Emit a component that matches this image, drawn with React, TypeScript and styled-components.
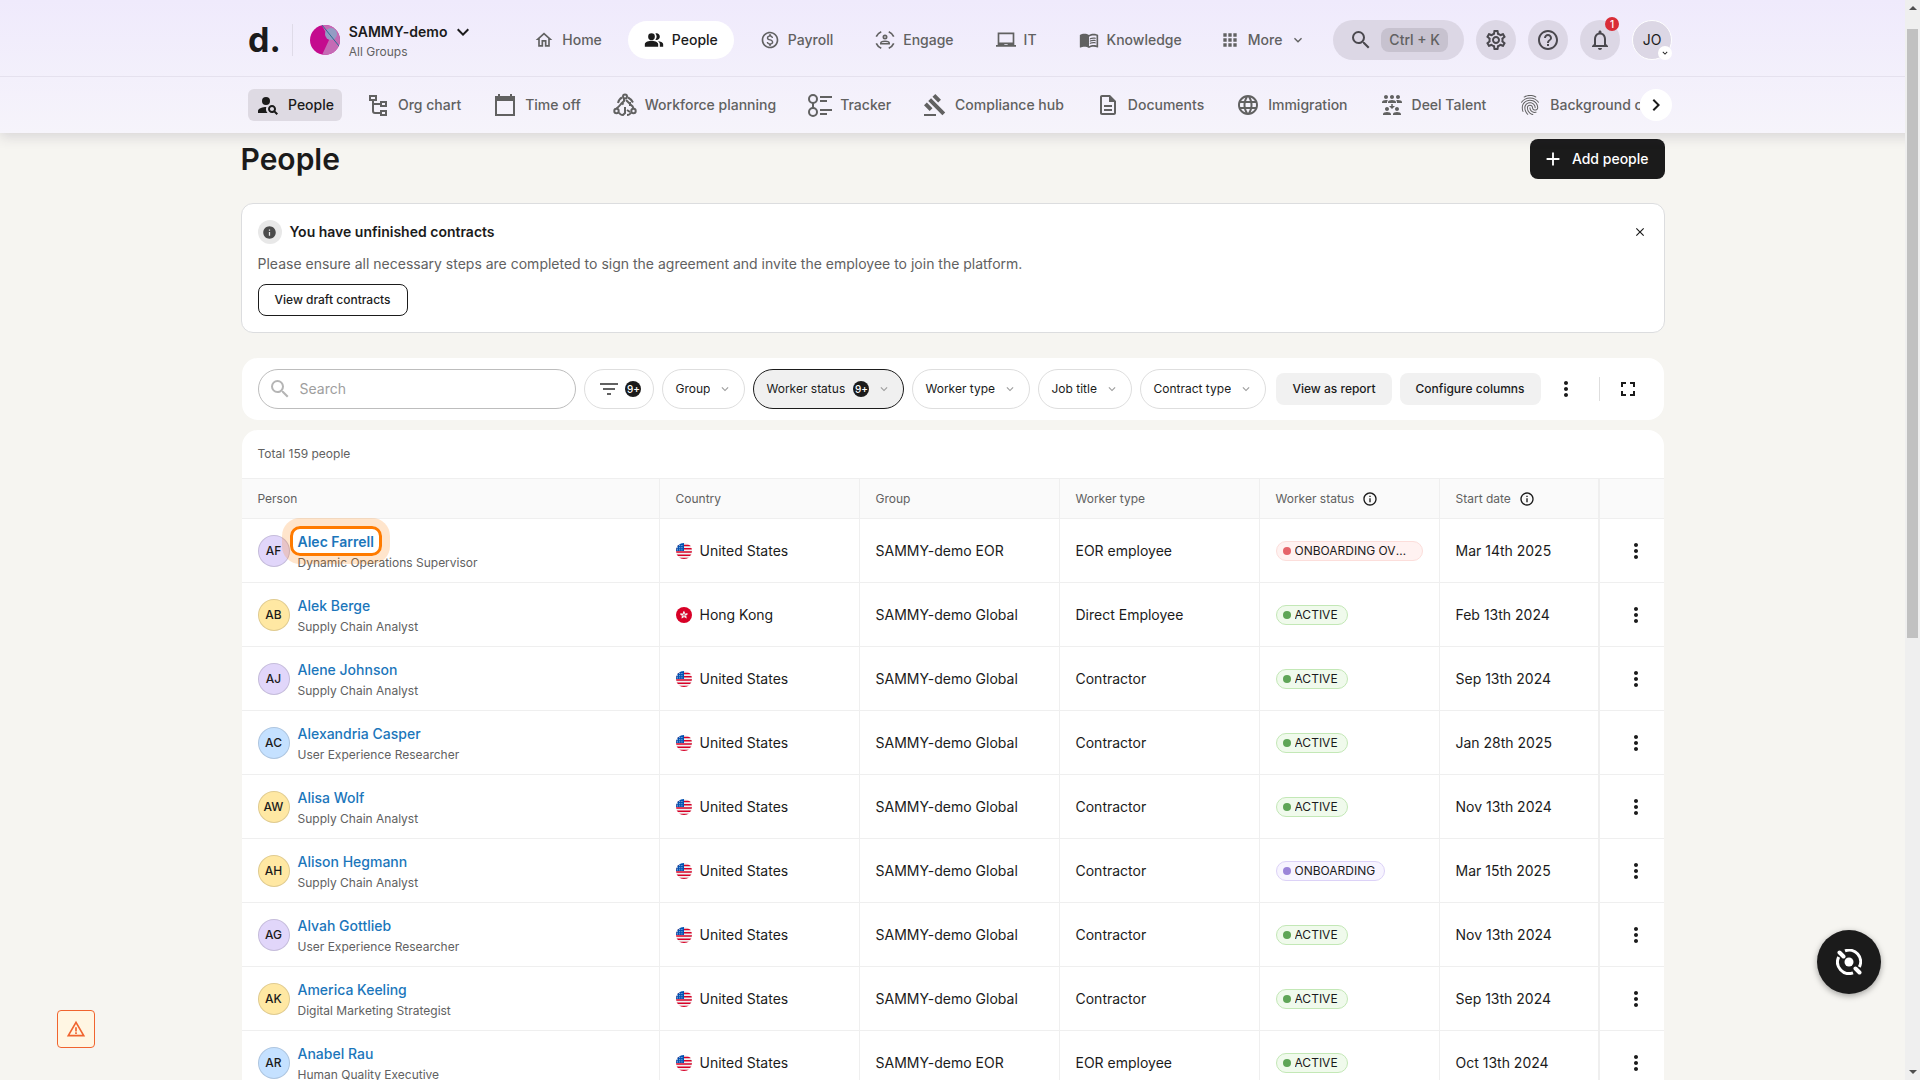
import React from "react";
import styled, { createGlobalStyle, css } from "styled-components";
import {
  MdOutlineHome, MdPeopleAlt, MdOutlineMonetizationOn, MdLaptopChromebook, MdMenuBook, MdApps,
  MdKeyboardArrowDown, MdSearch, MdOutlineSettings, MdHelpOutline, MdOutlineNotifications,
  MdPersonSearch, MdGavel, MdOutlineDescription, MdLanguage,
  MdReduceCapacity, MdFingerprint, MdChevronRight, MdAdd, MdInfo, MdInfoOutline, MdClose,
  MdFilterList, MdMoreVert, MdFullscreen, MdWarningAmber,
} from "react-icons/md";

const ink = "#1b1b1b";
const muted = "#616161";
const line = "#efefef";

const GlobalStyle = createGlobalStyle`
  *, *::before, *::after { box-sizing: border-box; }
  body {
    margin: 0;
    background: #f6f5f1;
    color: ${ink};
    font: 400 14px/20px Inter, "Liberation Sans", sans-serif;
  }
  button, input, select { font: inherit; color: inherit; margin: 0; }
  button { cursor: pointer; border: 0; padding: 0; background: none; }
  a { color: inherit; text-decoration: none; }
  svg { flex: none; display: block; }
  h1, h2, p { margin: 0; }
`;

const Page = styled.div`
  height: 100vh;
  overflow: hidden;
`;

/* ---------- header ---------- */

const Header = styled.header`
  position: relative;
  z-index: 1;
  background: linear-gradient(#efeafc, #f6f4fb);
  box-shadow: 0 4px 12px rgba(60, 50, 80, 0.16);
  color: ${muted};
  font-weight: 500;
`;

const HeaderInner = styled.div`
  max-width: 1424px;
  margin: 0 auto;
  display: flex;
  align-items: center;
`;

const TopBar = styled(HeaderInner)`
  height: 76px;
  padding-top: 4px;
`;

const TabBarEdge = styled.div`
  border-top: 1px solid #e5e1ee;
`;

const TabBar = styled(HeaderInner)`
  height: 56px;
`;

const Logo = styled.a`
  color: ${ink};
  font-size: 34px;
  line-height: 40px;
  font-weight: 700;
`;

const LogoRule = styled.span`
  width: 1px;
  height: 32px;
  margin: 0 17px 0 11px;
  background: #dfdbe8;
`;

const Workspace = styled.button`
  display: flex;
  align-items: center;
  gap: 9px;
  text-align: left;
`;

const WorkspaceName = styled.span`
  display: flex;
  align-items: center;
  gap: 4px;
  color: ${ink};
  font-weight: 600;
`;

const WorkspaceGroup = styled.span`
  display: block;
  font-size: 12px;
  line-height: 16px;
  font-weight: 400;
`;

const MainNav = styled.nav`
  display: flex;
  gap: 10px;
  margin: 0 27px 0 auto;
`;

const NavItem = styled.a<{ $active?: boolean }>`
  display: flex;
  align-items: center;
  gap: 8px;
  height: 38px;
  padding: 0 16px;
  border-radius: 19px;
  ${(p) => p.$active && css`background: #fff; color: ${ink};`}
`;

const MoreButton = styled(NavItem).attrs({ as: "button" })`
  padding: 0;
  margin-left: 12px;
`;

const Tools = styled.div`
  display: flex;
  gap: 12px;
  color: #4a484e;
`;

const Quick = styled.button`
  display: flex;
  align-items: center;
  gap: 8px;
  height: 40px;
  padding: 0 16px;
  border-radius: 20px;
  background: #dcd7e5;
`;

const Keys = styled.kbd`
  padding: 2px 8px;
  border-radius: 8px;
  background: #c7c2cf;
  color: ${muted};
  font: inherit;
`;

const Round = styled.button<{ $ring?: boolean }>`
  position: relative;
  display: grid;
  place-items: center;
  width: 40px;
  height: 40px;
  border-radius: 50%;
  background: #dcd7e5;
  ${(p) => p.$ring && css`border: 1px solid #fff; color: ${ink}; font-weight: 400;`}
`;

const Alert = styled.span`
  position: absolute;
  top: -3px;
  right: 1px;
  width: 14px;
  height: 14px;
  border-radius: 50%;
  background: #d92d37;
  color: #fff;
  font-size: 10px;
  line-height: 14px;
`;

const AvatarCaret = styled.span`
  position: absolute;
  right: -1px;
  bottom: -1px;
  width: 14px;
  height: 14px;
  display: grid;
  place-items: center;
  border-radius: 50%;
  background: #fff;
`;

const Tabs = styled.nav`
  display: flex;
  flex: 1;
  min-width: 0;
  gap: 16px;
  overflow: hidden;
`;

const Tab = styled.a<{ $active?: boolean }>`
  display: flex;
  flex: none;
  align-items: center;
  gap: 8px;
  height: 32px;
  padding: 0 8px;
  border-radius: 6px;
  ${(p) => p.$active && css`background: #dedae3; color: ${ink};`}
`;

const ScrollTabs = styled.button`
  display: grid;
  flex: none;
  place-items: center;
  width: 32px;
  height: 32px;
  border-radius: 50%;
  background: #fff;
  color: ${ink};
`;

/* ---------- page body ---------- */

const Viewport = styled.div`
  padding-right: 15px;
`;

const Main = styled.main`
  max-width: 1424px;
  margin: 0 auto;
  padding-top: 6px;
`;

const TitleRow = styled.div`
  display: flex;
  align-items: center;
  justify-content: space-between;
  margin-bottom: 24px;
`;

const Title = styled.h1`
  font-size: 30px;
  line-height: 40px;
  font-weight: 600;
`;

const AddButton = styled.button`
  display: flex;
  align-items: center;
  gap: 8px;
  height: 40px;
  padding: 0 16px 0 12px;
  border-radius: 8px;
  background: ${ink};
  color: #fff;
  font-weight: 500;
`;

const Banner = styled.section`
  display: flex;
  align-items: flex-start;
  justify-content: space-between;
  margin-bottom: 25px;
  padding: 16px;
  border: 1px solid #dcdddf;
  border-radius: 12px;
  background: #fff;
`;

const BannerTitle = styled.h2`
  display: flex;
  align-items: center;
  gap: 8px;
  font-size: 14px;
  line-height: 24px;
  font-weight: 600;
`;

const BannerIcon = styled.span`
  display: grid;
  place-items: center;
  width: 24px;
  height: 24px;
  border-radius: 50%;
  background: #e8e8e8;
  color: #4a4a4a;
`;

const BannerText = styled.p`
  margin: 10px 0;
  color: ${muted};
`;

const OutlineButton = styled.button`
  height: 32px;
  padding: 0 16px;
  border: 1px solid ${ink};
  border-radius: 8px;
  font-size: 12px;
  font-weight: 500;
`;

const CloseButton = styled.button`
  display: grid;
  place-items: center;
  width: 16px;
  height: 24px;
`;

const Toolbar = styled.div`
  display: flex;
  align-items: center;
  gap: 8px;
  margin: 0 1px 10px;
  padding: 11px 16px;
  border-radius: 16px;
  background: #fff;
  font-size: 12px;
  font-weight: 500;
`;

const SearchBox = styled.label`
  display: flex;
  flex: 1;
  align-items: center;
  gap: 8px;
  height: 40px;
  padding: 0 9px;
  border: 1px solid #bdbdbd;
  border-radius: 20px;
  color: #b5b5b5;
`;

const SearchInput = styled.input`
  flex: 1;
  min-width: 0;
  padding: 0;
  border: 0;
  outline: 0;
  background: none;
  color: ${ink};
  font-size: 14px;
  font-weight: 400;
  &::placeholder { color: #9e9e9e; opacity: 1; }
`;

const pill = css`
  display: flex;
  flex: none;
  align-items: center;
  height: 40px;
  padding: 0 12px;
  border: 1px solid #dedede;
  border-radius: 20px;
`;

const FilterButton = styled.button`
  ${pill}
  gap: 4px;
  color: ${muted};
`;

const FilterPill = styled.label<{ $active?: boolean }>`
  ${pill}
  gap: 8px;
  color: #9e9e9e;
  ${(p) => p.$active && css`border-color: ${ink}; background: #f0f0f0;`}
`;

const FilterSelect = styled.select`
  appearance: none;
  padding: 0;
  border: 0;
  background: none;
  color: ${ink};
  font-weight: 400;
`;

const Count = styled.span`
  width: 16px;
  height: 16px;
  border-radius: 50%;
  background: ${ink};
  color: #fff;
  font-size: 10px;
  line-height: 16px;
  text-align: center;
`;

const SoftButton = styled.button`
  flex: none;
  height: 32px;
  padding: 0 16px;
  border-radius: 8px;
  background: #f1f1f1;
`;

const ToolbarEnd = styled.div`
  display: flex;
  align-items: center;
  gap: 8px;
  padding-left: 2px;
`;

const IconButton = styled.button<{ $wide?: boolean }>`
  display: grid;
  place-items: center;
  width: ${(p) => (p.$wide ? 40 : 34)}px;
  height: 40px;
`;

const Rule = styled.span`
  width: 1px;
  height: 24px;
  margin-left: 8px;
  background: #dedede;
`;

/* ---------- table ---------- */

const TableCard = styled.section`
  margin: 0 1px;
  border-radius: 16px 16px 0 0;
  background: #fff;
`;

const Total = styled.p`
  padding: 14px 16px;
  color: ${muted};
  font-size: 12px;
`;

const Table = styled.table`
  width: 100%;
  table-layout: fixed;
  border-collapse: separate;
  border-spacing: 0;
`;

const Col = styled.col<{ $w?: number }>`
  width: ${(p) => (p.$w ? `${p.$w}px` : "auto")};
`;

const cell = css`
  padding: 0 16px;
  border-bottom: 1px solid ${line};
  border-right: 1px solid ${line};
  text-align: left;
  &:last-child { border-right: 0; border-left: 1px solid ${line}; }
`;

const Th = styled.th`
  ${cell}
  height: 41px;
  border-top: 1px solid ${line};
  background: #fafafa;
  color: ${muted};
  font-size: 12px;
  font-weight: 400;
`;

const Td = styled.td`
  ${cell}
  height: 64px;
`;

const HeadLabel = styled.span`
  display: flex;
  align-items: center;
  gap: 8px;
  svg { color: ${ink}; }
`;

const Person = styled.div`
  display: flex;
  align-items: center;
  gap: 8px;
`;

const PersonText = styled.div`
  padding-top: 2px;
`;

const tones = { purple: "#e1d6fa", yellow: "#ffe8a3", blue: "#c5e1ff" };
type Tone = keyof typeof tones;

const Avatar = styled.span<{ $tone: Tone }>`
  display: grid;
  flex: none;
  place-items: center;
  width: 32px;
  height: 32px;
  border: 1px solid rgba(0, 0, 0, 0.12);
  border-radius: 50%;
  background: ${(p) => tones[p.$tone]};
  font-size: 12px;
  font-weight: 500;
`;

const PersonLink = styled.a<{ $focus?: boolean }>`
  position: relative;
  display: block;
  width: fit-content;
  color: #1b76bb;
  line-height: 22px;
  font-weight: ${(p) => (p.$focus ? 600 : 500)};
  ${(p) => p.$focus && css`
    &::after {
      content: "";
      position: absolute;
      inset: -5px -8px -3px;
      border: 3px solid #ff7b00;
      border-radius: 10px;
      box-shadow: 0 0 0 8px rgba(255, 123, 0, 0.2);
    }
  `}
`;

const Role = styled.span`
  display: block;
  color: ${muted};
  font-size: 12px;
`;

const Country = styled.span`
  display: flex;
  align-items: center;
  gap: 8px;
`;

const statusTones = {
  green: { bg: "#f0faec", edge: "#c3e8b6", dot: "#5fa557" },
  red: { bg: "#fff2f1", edge: "#fcdedb", dot: "#e5646a" },
  violet: { bg: "#f7f4ff", edge: "#dcd2f7", dot: "#9b84d9" },
};
type StatusTone = keyof typeof statusTones;

const Status = styled.span<{ $tone: StatusTone }>`
  display: flex;
  align-items: center;
  gap: 4px;
  width: fit-content;
  max-width: 100%;
  height: 20px;
  padding: 0 9px 0 6px;
  border: 1px solid ${(p) => statusTones[p.$tone].edge};
  border-radius: 10px;
  background: ${(p) => statusTones[p.$tone].bg};
  font-size: 12px;
  line-height: 18px;
  &::before {
    content: "";
    flex: none;
    width: 8px;
    height: 8px;
    border-radius: 50%;
    background: ${(p) => statusTones[p.$tone].dot};
  }
`;

const StatusText = styled.span`
  overflow: hidden;
  text-overflow: ellipsis;
  white-space: nowrap;
`;

const RowMenu = styled.button`
  display: grid;
  place-items: center;
  width: 40px;
  height: 40px;
`;

/* ---------- floating parts ---------- */

const Fab = styled.button`
  position: fixed;
  right: 39px;
  bottom: 86px;
  z-index: 2;
  display: grid;
  place-items: center;
  width: 64px;
  height: 64px;
  border-radius: 50%;
  background: ${ink};
  box-shadow: 0 2px 6px rgba(0, 0, 0, 0.35);
`;

const WarnButton = styled.button`
  position: fixed;
  left: 57px;
  bottom: 32px;
  z-index: 2;
  display: grid;
  place-items: center;
  width: 38px;
  height: 38px;
  border: 1px solid #f0642f;
  border-radius: 4px;
  background: #fff6e3;
  color: #f0642f;
`;

const Scrollbar = styled.div`
  position: fixed;
  top: 0;
  right: 0;
  bottom: 0;
  z-index: 3;
  display: flex;
  flex-direction: column;
  align-items: center;
  justify-content: space-between;
  width: 15px;
  padding: 6px 0;
  background: #efefef;
`;

const Thumb = styled.span`
  width: 11px;
  height: 57%;
  margin: 19px 0 auto;
  background: #c1c1c1;
`;

const Arrow = styled.span<{ $up?: boolean }>`
  border: solid transparent;
  border-width: ${(p) => (p.$up ? "0 4px 4px" : "4px 4px 0")};
  ${(p) => (p.$up ? "border-bottom-color" : "border-top-color")}: #505050;
`;

/* ---------- drawings ---------- */

const stroke = { fill: "none", stroke: "currentColor", strokeWidth: 2 } as const;

const WorkspaceLogo = () => (
  <svg width="30" height="30" viewBox="0 0 30 30" aria-hidden="true">
    <defs><clipPath id="ws"><circle cx="15" cy="15" r="15" /></clipPath></defs>
    <g clipPath="url(#ws)">
      <path fill="#c40b8e" d="M0 0h30v30H0z" />
      <path fill="#c56bb5" d="M12 0h18v30H12l7-15z" />
      <circle cx="21" cy="9" r="6" fill="#949cc4" />
      <path d="M12 0l17 21" stroke="#2d6d92" strokeWidth="1" />
    </g>
  </svg>
);

const EngageIcon = () => (
  <svg width="20" height="20" viewBox="0 0 24 24" aria-hidden="true" {...stroke}>
    <path d="M7.500 2a12 12 0 0 0-6 6M16.500 2a12 12 0 0 1 6 6M1.500 16a12 12 0 0 0 6 6M22.500 16a12 12 0 0 1-6 6" />
    <circle cx="12" cy="8.500" r="2" />
    <path d="M7 16.500v-.7c0-1.500 3-2.300 5-2.300s5 .8 5 2.300v.7z" />
  </svg>
);

const OrgChartIcon = () => (
  <svg width="24" height="24" viewBox="0 0 24 24" aria-hidden="true" {...stroke}>
    <path d="M4 3h6v4H4zM15 9h5v4h-5zM15 18h5v4h-5zM7 7v11q0 2 2 2h6M7 11h8" />
  </svg>
);

const CalendarIcon = () => (
  <svg width="24" height="24" viewBox="0 0 24 24" aria-hidden="true" fill="currentColor">
    <path d="M22 3h-3V1h-2v2H7V1H5v2H2v20h20V3zm-2 18H4V8h16v13z" />
  </svg>
);

const WorkforceIcon = () => (
  <svg width="24" height="24" viewBox="0 0 24 24" aria-hidden="true" {...stroke}>
    <circle cx="12" cy="3.500" r="2" />
    <circle cx="3.500" cy="18" r="2.200" />
    <circle cx="20.500" cy="18" r="2.200" />
    <path d="M9 4.500Q6 6 5 10M15 4.500Q18 6 20 9.500M11 6v2L8 11q-1.500 2-4.500 4.500M8.500 9.500l2 2M13 7l5 5q2 1 2.500 3.500M17 9v4M6 19.500q1 2.500 4 2.500l2-2v-6M14 22q3 0 4-2.500M14 17l3 2" />
  </svg>
);

const TrackerIcon = () => (
  <svg width="24" height="24" viewBox="0 0 24 24" aria-hidden="true" {...stroke}>
    <circle cx="5" cy="6" r="4" />
    <circle cx="5" cy="19" r="4" />
    <path d="M5 10v5M12 4h12M12 8h7M12 17h12M12 21h7" />
  </svg>
);

const UsFlag = () => (
  <svg width="16" height="16" viewBox="0 0 16 16" aria-hidden="true">
    <defs><clipPath id="flag"><circle cx="8" cy="8" r="8" /></clipPath></defs>
    <g clipPath="url(#flag)">
      <path fill="#f0f0f0" d="M0 0h16v16H0z" />
      <path d="M0 2.500h16M0 5.700h16M0 9h16M0 12.200h16M0 15.400h16" stroke="#d80027" strokeWidth="1.500" />
      <path fill="#0052b4" d="M0 0h8v8H0z" />
      <path d="M1 2.500h6.500M1 4.700h6.500M1 6.900h6.500" stroke="#f0f0f0" strokeWidth=".7" strokeDasharray="1 1.200" />
    </g>
  </svg>
);

const HkFlag = () => (
  <svg width="16" height="16" viewBox="0 0 16 16" aria-hidden="true">
    <circle cx="8" cy="8" r="8" fill="#d80027" />
    {[0, 72, 144, 216, 288].map((a) => (
      <path key={a} fill="#f0f0f0" transform={`rotate(${a} 8 8)`} d="M8 7.600C6.400 6.500 6.600 4.400 8.300 3.700c-.4 1 1 1.400.7 2.500-.2.700-.6 1-1 1.400z" />
    ))}
  </svg>
);

const AssistIcon = () => (
  <svg width="26" height="26" viewBox="0 0 26 26" aria-hidden="true" fill="none" stroke="#fff" strokeWidth="3">
    <circle cx="13" cy="13" r="4.500" fill="#fff" stroke="none" />
    <path d="M9 1.900A11.500 11.500 0 0 1 23.300 18M17 23.800A11.500 11.500 0 0 1 2.700 8" />
    <path d="M3.500 3.500l4 4M19.500 19.500l4 4" strokeWidth="4" strokeLinecap="round" />
  </svg>
);

/* ---------- data ---------- */

const nav = [
  ["Home", <MdOutlineHome size={20} />],
  ["People", <MdPeopleAlt size={20} />],
  ["Payroll", <MdOutlineMonetizationOn size={20} />],
  ["Engage", <EngageIcon />],
  ["IT", <MdLaptopChromebook size={20} />],
  ["Knowledge", <MdMenuBook size={20} />],
] as const;

const tabs = [
  ["People", <MdPersonSearch size={24} />],
  ["Org chart", <OrgChartIcon />],
  ["Time off", <CalendarIcon />],
  ["Workforce planning", <WorkforceIcon />],
  ["Tracker", <TrackerIcon />],
  ["Compliance hub", <MdGavel size={24} />],
  ["Documents", <MdOutlineDescription size={24} />],
  ["Immigration", <MdLanguage size={24} />],
  ["Deel Talent", <MdReduceCapacity size={24} />],
  ["Background checks", <MdFingerprint size={24} />],
] as const;

const filters = [
  { name: "Group" },
  { name: "Worker status", count: "9+" },
  { name: "Worker type" },
  { name: "Job title" },
  { name: "Contract type" },
];

type Row = {
  name: string; role: string; tone: Tone; country: string; group: string;
  type: string; status: string; statusTone: StatusTone; date: string;
};

const row = (
  name: string, role: string, tone: Tone, group: string, type: string, date: string,
  status = "ACTIVE", statusTone: StatusTone = "green", country = "United States",
): Row => ({ name, role, tone, group: `SAMMY-demo ${group}`, type, date, status, statusTone, country });

const rows: Row[] = [
  row("Alec Farrell", "Dynamic Operations Supervisor", "purple", "EOR", "EOR employee", "Mar 14th 2025", "ONBOARDING OVERDUE", "red"),
  row("Alek Berge", "Supply Chain Analyst", "yellow", "Global", "Direct Employee", "Feb 13th 2024", "ACTIVE", "green", "Hong Kong"),
  row("Alene Johnson", "Supply Chain Analyst", "purple", "Global", "Contractor", "Sep 13th 2024"),
  row("Alexandria Casper", "User Experience Researcher", "blue", "Global", "Contractor", "Jan 28th 2025"),
  row("Alisa Wolf", "Supply Chain Analyst", "yellow", "Global", "Contractor", "Nov 13th 2024"),
  row("Alison Hegmann", "Supply Chain Analyst", "yellow", "Global", "Contractor", "Mar 15th 2025", "ONBOARDING", "violet"),
  row("Alvah Gottlieb", "User Experience Researcher", "purple", "Global", "Contractor", "Nov 13th 2024"),
  row("America Keeling", "Digital Marketing Strategist", "yellow", "Global", "Contractor", "Sep 13th 2024"),
  row("Anabel Rau", "Human Quality Executive", "blue", "EOR", "EOR employee", "Oct 13th 2024"),
];

const initials = (name: string) => name.split(" ").map((part) => part[0]).join("");

export default function App() {
  return (
    <Page>
      <GlobalStyle />
      <Header>
        <TopBar>
          <Logo href="#" aria-label="Deel">d.</Logo>
          <LogoRule />
          <Workspace aria-haspopup="menu">
            <WorkspaceLogo />
            <span>
              <WorkspaceName>SAMMY-demo <MdKeyboardArrowDown size={24} /></WorkspaceName>
              <WorkspaceGroup>All Groups</WorkspaceGroup>
            </span>
          </Workspace>
          <MainNav>
            {nav.map(([label, icon]) => (
              <NavItem key={label} href="#" $active={label === "People"}>{icon}{label}</NavItem>
            ))}
            <MoreButton><MdApps size={20} />More<MdKeyboardArrowDown size={16} /></MoreButton>
          </MainNav>
          <Tools>
            <Quick aria-label="Search"><MdSearch size={24} /><Keys>Ctrl + K</Keys></Quick>
            <Round aria-label="Settings"><MdOutlineSettings size={24} /></Round>
            <Round aria-label="Help"><MdHelpOutline size={24} /></Round>
            <Round aria-label="Notifications"><MdOutlineNotifications size={24} /><Alert>1</Alert></Round>
            <Round $ring aria-label="Account">JO<AvatarCaret><MdKeyboardArrowDown size={10} /></AvatarCaret></Round>
          </Tools>
        </TopBar>
        <TabBarEdge>
          <TabBar>
            <Tabs>
              {tabs.map(([label, icon]) => (
                <Tab key={label} href="#" $active={label === "People"}>{icon}{label}</Tab>
              ))}
            </Tabs>
            <ScrollTabs aria-label="Scroll tabs"><MdChevronRight size={24} /></ScrollTabs>
          </TabBar>
        </TabBarEdge>
      </Header>

      <Viewport>
        <Main>
          <TitleRow>
            <Title>People</Title>
            <AddButton><MdAdd size={22} />Add people</AddButton>
          </TitleRow>

          <Banner>
            <div>
              <BannerTitle><BannerIcon><MdInfo size={15} /></BannerIcon>You have unfinished contracts</BannerTitle>
              <BannerText>
                Please ensure all necessary steps are completed to sign the agreement and invite the employee to join the platform.
              </BannerText>
              <OutlineButton>View draft contracts</OutlineButton>
            </div>
            <CloseButton aria-label="Dismiss"><MdClose size={14} /></CloseButton>
          </Banner>

          <Toolbar>
            <SearchBox>
              <MdSearch size={24} />
              <SearchInput type="search" placeholder="Search" aria-label="Search people" />
            </SearchBox>
            <FilterButton aria-label="All filters"><MdFilterList size={24} /><Count>9+</Count></FilterButton>
            {filters.map(({ name, count }) => (
              <FilterPill key={name} $active={!!count}>
                <FilterSelect aria-label={name}><option>{name}</option></FilterSelect>
                {count && <Count>{count}</Count>}
                <MdKeyboardArrowDown size={14} />
              </FilterPill>
            ))}
            <ToolbarEnd>
              <SoftButton>View as report</SoftButton>
              <SoftButton>Configure columns</SoftButton>
              <IconButton aria-label="More actions"><MdMoreVert size={24} /></IconButton>
              <Rule />
              <IconButton $wide aria-label="Full screen"><MdFullscreen size={24} /></IconButton>
            </ToolbarEnd>
          </Toolbar>

          <TableCard>
            <Total>Total 159 people</Total>
            <Table>
              <colgroup>
                <Col /><Col $w={200} /><Col $w={200} /><Col $w={200} /><Col $w={180} /><Col $w={159} /><Col $w={65} />
              </colgroup>
              <thead>
                <tr>
                  <Th>Person</Th>
                  <Th>Country</Th>
                  <Th>Group</Th>
                  <Th>Worker type</Th>
                  <Th><HeadLabel>Worker status <MdInfoOutline size={16} /></HeadLabel></Th>
                  <Th><HeadLabel>Start date <MdInfoOutline size={16} /></HeadLabel></Th>
                  <Th aria-label="Actions" />
                </tr>
              </thead>
              <tbody>
                {rows.map((r, i) => (
                  <tr key={r.name}>
                    <Td>
                      <Person>
                        <Avatar $tone={r.tone}>{initials(r.name)}</Avatar>
                        <PersonText>
                          <PersonLink href="#" $focus={i === 0}>{r.name}</PersonLink>
                          <Role>{r.role}</Role>
                        </PersonText>
                      </Person>
                    </Td>
                    <Td><Country>{r.country === "Hong Kong" ? <HkFlag /> : <UsFlag />}{r.country}</Country></Td>
                    <Td>{r.group}</Td>
                    <Td>{r.type}</Td>
                    <Td><Status $tone={r.statusTone}><StatusText>{r.status}</StatusText></Status></Td>
                    <Td>{r.date}</Td>
                    <Td><RowMenu aria-label={`Actions for ${r.name}`}><MdMoreVert size={24} /></RowMenu></Td>
                  </tr>
                ))}
              </tbody>
            </Table>
          </TableCard>
        </Main>
      </Viewport>

      <WarnButton aria-label="Warnings"><MdWarningAmber size={20} /></WarnButton>
      <Fab aria-label="Assistant"><AssistIcon /></Fab>
      <Scrollbar aria-hidden="true"><Arrow $up /><Thumb /><Arrow /></Scrollbar>
    </Page>
  );
}
